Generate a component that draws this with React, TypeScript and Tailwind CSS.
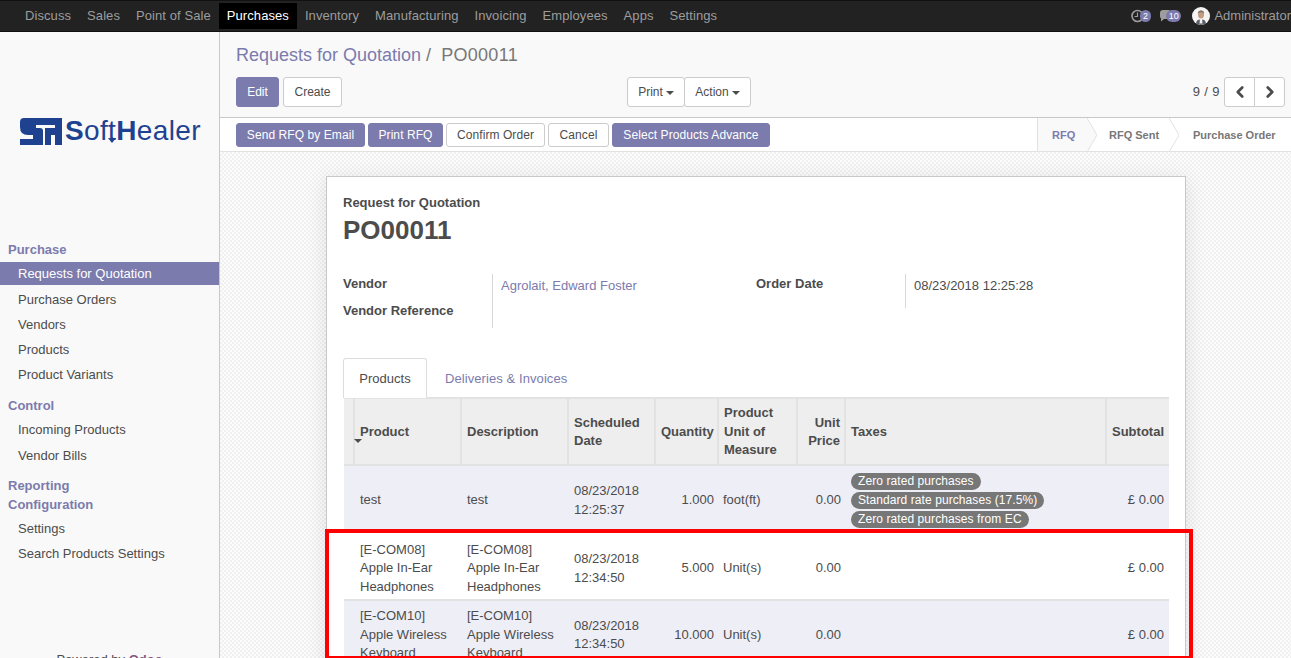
import { ChevronLeft, ChevronRight } from "lucide-react";

const apps = ["Discuss", "Sales", "Point of Sale", "Purchases", "Inventory", "Manufacturing", "Invoicing", "Employees", "Apps", "Settings"];

function SoftHealerLogo() {
  return (
    <div className="flex items-center gap-[3px] text-[#1f4290]">
      <svg width="42" height="27" viewBox="0 0 42 27" fill="currentColor">
        <path d="M4 0H42V27H35V17H31V27H25V10H35V7H16V10H20Q23 10 23 13V27H0V21H13V17H8Q0 17 0 9V4Q0 0 4 0Z" />
      </svg>
      <span className="text-[28px] leading-none tracking-[0.35px]">
        <b>S</b>of
        <span className="relative font-light">
          t
          <span className="absolute left-[0px] bottom-[3px] border-x-[4px] border-x-transparent border-t-[5px] border-t-[#1f4290]" />
        </span>
        <b>H</b>ealer
      </span>
    </div>
  );
}

function Btn({ label, primary, caret, w }: { label: string; primary?: boolean; caret?: boolean; w?: string }) {
  return (
    <button
      className={
        "h-[30px] rounded-[3px] border text-[12px] flex items-center justify-center " +
        (w ?? "px-[10px]") +
        " " +
        (primary ? "bg-[#7c7bad] border-[#7c7bad] text-white" : "bg-white border-[#cccccc] text-[#4c4c4c]")
      }
    >
      {label}
      {caret && <span className="ml-[3px] mt-[1px] border-x-[4px] border-x-transparent border-t-[4px] border-t-[#4c4c4c]" />}
    </button>
  );
}

function SmallBtn({ label, primary, w }: { label: string; primary?: boolean; w: string }) {
  return (
    <button
      className={
        "h-[24px] rounded-[3px] border text-[12px] tracking-[0.08px] " +
        w +
        " " +
        (primary ? "bg-[#7c7bad] border-[#7c7bad] text-white" : "bg-white border-[#cccccc] text-[#4c4c4c]")
      }
    >
      {label}
    </button>
  );
}

function Sidebar() {
  const Head = ({ t, cls }: { t: string; cls: string }) => (
    <div className={"pl-2 font-bold text-[#7c7bad] " + cls}>{t}</div>
  );
  const Item = ({ t, active, cls }: { t: string; active?: boolean; cls: string }) => (
    <div className={"pl-[18px] " + cls + (active ? " bg-[#7c7bad] text-white" : "")}>{t}</div>
  );
  return (
    <aside className="w-[220px] shrink-0 bg-[#f9f9f9] border-r border-[#c8c8c8] relative text-[13px] text-[#4c4c4c]">
      <div className="h-[202px] pt-[85px] pl-[20px]">
        <SoftHealerLogo />
      </div>
      <Head t="Purchase" cls="mt-[5px] h-[23px] leading-[22px]" />
      <Item t="Requests for Quotation" active cls="h-[23px] leading-[23px]" />
      <Item t="Purchase Orders" cls="mt-[2px] h-[25px] leading-[25px]" />
      <Item t="Vendors" cls="h-[25px] leading-[25px]" />
      <Item t="Products" cls="h-[25px] leading-[25px]" />
      <Item t="Product Variants" cls="h-[25px] leading-[25px]" />
      <Head t="Control" cls="mt-[7px] h-[23px] leading-[24px]" />
      <Item t="Incoming Products" cls="h-[26px] leading-[26px]" />
      <Item t="Vendor Bills" cls="h-[25px] leading-[25px]" />
      <Head t="Reporting" cls="mt-[8px] h-[19px] leading-[19px]" />
      <Head t="Configuration" cls="h-[19px] leading-[19px]" />
      <Item t="Settings" cls="mt-[2px] h-[25px] leading-[25px]" />
      <Item t="Search Products Settings" cls="h-[25px] leading-[25px]" />
      <div className="mt-[84px] text-center">
        Powered by <b className="text-[#875a7b]">Odoo</b>
      </div>
    </aside>
  );
}

const th = "border-l-2 border-[#e2e2e2] px-[5px] pt-[1px] font-bold text-left align-middle leading-[18.500px]";
const td = "pl-[6px] pr-[5px] align-middle leading-[18.500px]";
const uom = "pl-[5px] pr-[5px] align-middle leading-[18.500px]";
const num = "pl-[5px] pr-[4px] align-middle leading-[18.500px] text-right";
const sub = "pl-[5px] pr-[5px] align-middle leading-[18.500px] text-right";

function Pill({ t }: { t: string }) {
  return <span className="inline-block h-[17px] leading-[17px] rounded-full bg-[#777777] text-white px-[7px] text-[12px] tracking-[0.08px] my-[1px] whitespace-nowrap">{t}</span>;
}

function Lines() {
  return (
    <table className="ml-px w-[825px] table-fixed border-collapse text-[13px] text-[#4c4c4c]">
      <colgroup>
        <col className="w-[10px]" />
        <col className="w-[107px]" />
        <col className="w-[107px]" />
        <col className="w-[87px]" />
        <col className="w-[63px]" />
        <col className="w-[79px]" />
        <col className="w-[48px]" />
        <col className="w-[261px]" />
        <col className="w-[63px]" />
      </colgroup>
      <thead>
        <tr className="h-[67px] bg-[#eeeeee] border-t-2 border-b-2 border-[#e2e2e2]">
          <th className="relative">
            <span className="absolute left-[10px] top-[40px] border-x-[4px] border-x-transparent border-t-[4px] border-t-[#4c4c4c]" />
          </th>
          <th className={th}>Product</th>
          <th className={th}>Description</th>
          <th className={th}>Scheduled Date</th>
          <th className={th + " text-right !pr-[5px]"}>Quantity</th>
          <th className={th}>Product Unit of Measure</th>
          <th className={th + " text-right !pr-[4px]"}>Unit Price</th>
          <th className={th}>Taxes</th>
          <th className={th}>Subtotal</th>
        </tr>
      </thead>
      <tbody>
        <tr className="h-[67px] bg-[#eeeef7] border-b-2 border-[#e2e2e2] [&>td]:pt-[4px]">
          <td />
          <td className={td}>test</td>
          <td className={td}>test</td>
          <td className={td}>08/23/2018 12:25:37</td>
          <td className={num}>1.000</td>
          <td className={uom}>foot(ft)</td>
          <td className={num}>0.00</td>
          <td className={td + " leading-[17px]"}>
            <Pill t="Zero rated purchases" />
            <br />
            <Pill t="Standard rate purchases (17.5%)" />
            <br />
            <Pill t="Zero rated purchases from EC" />
          </td>
          <td className={sub}>£ 0.00</td>
        </tr>
        <tr className="h-[68px] border-b-2 border-[#e2e2e2] [&>td]:pt-[5px]">
          <td />
          <td className={td}>[E-COM08] Apple In-Ear Headphones</td>
          <td className={td}>[E-COM08] Apple In-Ear Headphones</td>
          <td className={td}>08/23/2018 12:34:50</td>
          <td className={num}>5.000</td>
          <td className={uom}>Unit(s)</td>
          <td className={num}>0.00</td>
          <td />
          <td className={sub}>£ 0.00</td>
        </tr>
        <tr className="h-[68px] bg-[#eeeef7] [&>td]:pt-[1px]">
          <td />
          <td className={td}>[E-COM10] Apple Wireless Keyboard</td>
          <td className={td}>[E-COM10] Apple Wireless Keyboard</td>
          <td className={td}>08/23/2018 12:34:50</td>
          <td className={num}>10.000</td>
          <td className={uom}>Unit(s)</td>
          <td className={num}>0.00</td>
          <td />
          <td className={sub}>£ 0.00</td>
        </tr>
      </tbody>
    </table>
  );
}

export default function App() {
  return (
    <div className="relative w-[1291px] h-[658px] overflow-hidden bg-white font-['Liberation_Sans',Arial,sans-serif] text-[13px] text-[#4c4c4c]">
      {/* top bar */}
      <nav className="h-[32px] bg-[#222222] border-y border-[#111111] flex items-center justify-between text-[13px] text-[#9d9d9d]">
        <div className="flex pl-[17px] h-[26px] tracking-[0.08px]">
          {apps.map((a) => (
            <span key={a} className={"px-2 leading-[26px] " + (a === "Purchases" ? "bg-black text-white" : "")}>
              {a}
            </span>
          ))}
        </div>
        <div className="flex items-center whitespace-nowrap w-[160px] shrink-0 pl-0 overflow-hidden">
          <span className="relative w-[19px] h-[14px]">
            <svg className="absolute left-0 top-0" width="13" height="14" viewBox="0 0 13 14" fill="none" stroke="#9d9d9d">
              <circle cx="6.500" cy="7" r="5.500" strokeWidth="1.600" />
              <path d="M6.500 3.500V7.500H3.500" strokeWidth="1.200" />
            </svg>
            <span className="absolute left-[9px] top-[1px] w-[11px] h-[12px] rounded-full bg-[#7c7bad] text-white text-[9px] leading-[12px] text-center">2</span>
          </span>
          <span className="relative ml-[11px] w-[21px] h-[14px]">
            <svg className="absolute left-0 top-[1px]" width="11" height="12" viewBox="0 0 11 12" fill="#9d9d9d">
              <path d="M3 0h5a3 3 0 0 1 3 3v3a3 3 0 0 1-3 3H4L1 11.500V8.500A3 3 0 0 1 0 6V3a3 3 0 0 1 3-3z" />
            </svg>
            <span className="absolute left-[6px] top-[1px] w-[15px] h-[12px] rounded-full bg-[#7c7bad] text-white text-[9px] leading-[12px] text-center">10</span>
          </span>
          <svg className="ml-[12px] shrink-0" width="18" height="18" viewBox="0 0 18 18">
            <circle cx="9" cy="9" r="9" fill="#f6f4f2" />
            <ellipse cx="9" cy="7.500" rx="3" ry="4" fill="#c39a82" />
            <path d="M5.800 6.500C5.500 2.500 12.500 2.500 12.200 6.500 11 4.800 7 4.800 5.800 6.500z" fill="#77716b" />
            <path d="M4 16.500C4.500 13 6 12.500 9 12.500s4.500.500 5 4L9 18z" fill="#5b5d66" />
            <path d="M8 12h2l.500 4.500h-3z" fill="#f0f0f0" />
          </svg>
          <span className="ml-[4px]">Administrator</span>
        </div>
      </nav>

      <div className="flex h-[626px]">
        <Sidebar />
        <main className="flex-1 min-w-0 flex flex-col">
          {/* control panel */}
          <div className="h-[86px] bg-[#f9f9f9] border-b border-[#c8c8c8] pl-4 pr-[6px] pt-[12px] shrink-0">
            <div className="h-[22px] text-[18px] leading-[22px] flex gap-[5px]">
              <span className="text-[#7c7bad]">Requests for Quotation</span>
              <span className="text-[#777777]">/</span>
              <span className="ml-[5px] text-[#777777] tracking-[0.3px]">PO00011</span>
            </div>
            <div className="mt-[11px] flex items-center relative">
              <div className="flex gap-[4px]">
                <Btn label="Edit" primary w="w-[43px]" />
                <Btn label="Create" w="w-[59px]" />
              </div>
              <div className="ml-[285px] flex -space-x-px">
                <Btn label="Print" caret w="w-[58px]" />
                <Btn label="Action" caret w="w-[67px]" />
              </div>
              <div className="ml-auto flex items-center gap-[4px]">
                <span className="text-[13px] tracking-[0.4px]">9 / 9</span>
                <div className="flex -space-x-px">
                  <button className="w-[31px] h-[30px] border border-[#cccccc] bg-white rounded-l-[3px] flex items-center justify-center"><ChevronLeft size={18} strokeWidth={3.6} /></button>
                  <button className="w-[31px] h-[30px] border border-[#cccccc] bg-white rounded-r-[3px] flex items-center justify-center"><ChevronRight size={18} strokeWidth={3.6} /></button>
                </div>
              </div>
            </div>
          </div>

          {/* status bar */}
          <div className="h-[34px] shrink-0 bg-white border-b border-[#e2e2e2] flex items-center justify-between pl-4">
            <div className="flex gap-[3px]">
              <SmallBtn label="Send RFQ by Email" primary w="w-[129px]" />
              <SmallBtn label="Print RFQ" primary w="w-[75px]" />
              <SmallBtn label="Confirm Order" w="w-[99px]" />
              <SmallBtn label="Cancel" w="w-[61px]" />
              <SmallBtn label="Select Products Advance" primary w="w-[158px]" />
            </div>
            <div className="flex h-full text-[11px] font-bold text-[#777777]">
              <span className="w-[51px] pl-[14px] bg-[#f9f9f9] border-l border-[#e2e2e2] text-[#7c7bad] leading-[34px]">RFQ</span>
              <span className="w-[82px] pl-[21px] leading-[34px] relative">
                <svg className="absolute -left-px top-0" width="10" height="34" viewBox="0 0 10 34" fill="none"><path d="M0 0l10 17L0 34V0z" fill="#f9f9f9" /><path d="M0 0l10 17L0 34" stroke="#e2e2e2" /></svg>
                RFQ Sent
              </span>
              <span className="w-[121px] pl-[23px] leading-[34px] relative">
                <svg className="absolute -left-px top-0" width="10" height="34" viewBox="0 0 10 34" fill="none"><path d="M0 0l10 17L0 34" stroke="#e2e2e2" /></svg>
                Purchase Order
              </span>
            </div>
          </div>

          {/* sheet */}
          <div className="flex-1 min-h-0 overflow-hidden bg-[#f5f5f5] bg-[repeating-conic-gradient(#f0f0f0_0_25%,#fcfcfc_0_50%)] bg-[length:4px_4px] pt-[24px] pl-[106px]">
            <div className="w-[860px] h-[600px] bg-white border border-[#c8c8c8] shadow-[0_4px_20px_rgba(0,0,0,0.1)] pl-[16px] pr-[16px] pt-[18px]">
              <div className="font-bold leading-[16px]">Request for Quotation</div>
              <div className="font-bold text-[26px] leading-[30px] mt-[4px]">PO00011</div>
              <div className="mt-[29px] flex h-[54px]">
                <div className="w-[149px] font-bold">
                  <div className="h-[27px] leading-[20px]">Vendor</div>
                  <div className="h-[27px] leading-[20px]">Vendor Reference</div>
                </div>
                <div className="w-[264px] border-l border-[#d8d8d8] pl-2 text-[#7c7bad] leading-[24px]">Agrolait, Edward Foster</div>
                <div className="w-[149px] font-bold leading-[20px]">Order Date</div>
                <div className="h-[34px] border-l border-[#d8d8d8] pl-2 leading-[24px]">08/23/2018 12:25:28</div>
              </div>
              <div className="mt-[30px] flex h-[39px]">
                <div className="w-[84px] h-[40px] bg-white border border-b-0 border-[#dddddd] rounded-t-[3px] text-center leading-[39px] z-10">Products</div>
                <div className="ml-[18px] text-[#7c7bad] leading-[41px] tracking-[0.08px]">Deliveries &amp; Invoices</div>
              </div>
              <Lines />
            </div>
          </div>
        </main>
      </div>

      {/* red annotation frame from the screenshot */}
      <div className="absolute left-[325px] top-[529px] w-[868px] h-[131px] border-[4px] border-[#ff0000]" />
    </div>
  );
}
